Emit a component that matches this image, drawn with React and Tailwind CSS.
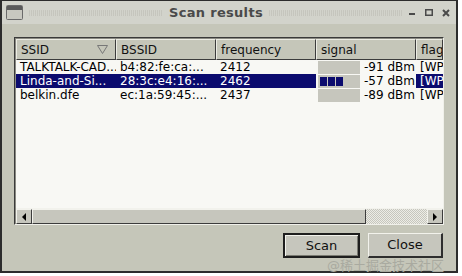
import React from 'react';

const ROWS = [
  { ssid: 'TALKTALK-CAD...', bssid: 'b4:82:fe:ca:...', freq: '2412', level: 0, dbm: '-91 dBm', flag: '[WP', selected: false },
  { ssid: 'Linda-and-Si...', bssid: '28:3c:e4:16:...', freq: '2462', level: 3, dbm: '-57 dBm', flag: '[WP', selected: true },
  { ssid: 'belkin.dfe', bssid: 'ec:1a:59:45:...', freq: '2437', level: 0, dbm: '-89 dBm', flag: '[WP', selected: false },
];

function HeaderCell({ children, w, last }) {
  return (
    <div
      className={`relative flex h-full shrink-0 items-center border-t border-l border-t-[#ececE4] border-l-[#ececE4] border-r border-b border-r-[#3c3c3c] border-b-[#3c3c3c] pl-[4px] ${last ? 'flex-1 overflow-hidden' : ''}`}
      style={w ? { width: w } : undefined}
    >
      {children}
    </div>
  );
}

function SignalBar({ level }) {
  return (
    <div className="flex h-[13px] w-[42px] shrink-0 items-center gap-[1px] bg-[#c6c6bd] pl-[2px]">
      {Array.from({ length: level }).map((_, i) => (
        <div key={i} className="h-[9px] w-[7px] bg-[#0b0b6e]" />
      ))}
    </div>
  );
}

function Row({ r }) {
  const sel = r.selected;
  const cell = `h-full shrink-0 whitespace-nowrap pl-[4px] overflow-hidden ${sel ? 'bg-[#0b0b6e] text-white' : 'text-black'}`;
  return (
    <div className="flex h-[14px] items-center leading-[14px]">
      <div className={`${cell} w-[100px] pl-[3px]`}>{r.ssid}</div>
      <div className={`${cell} w-[100px]`}>{r.bssid}</div>
      <div className={`${cell} w-[100px]`}>{r.freq}</div>
      <div className="flex h-full w-[100px] shrink-0 items-center gap-[4px] pl-[2px] text-black">
        <SignalBar level={r.level} />
        <span className="whitespace-nowrap">{r.dbm}</span>
      </div>
      <div className={`${cell} flex-1 pl-[2px]`}>{r.flag}</div>
    </div>
  );
}

function ArrowBtn({ dir }) {
  return (
    <div className="flex h-full w-[16px] shrink-0 items-center justify-center border-t border-l border-t-[#f2f2ec] border-l-[#f2f2ec] border-r border-b border-r-[#3c3c3c] border-b-[#3c3c3c] bg-[#c6c6bd]">
      <svg width="6" height="8" viewBox="0 0 6 8">
        {dir === 'left' ? <path d="M5 0 L1 4 L5 8 Z" fill="#000" /> : <path d="M1 0 L5 4 L1 8 Z" fill="#000" />}
      </svg>
    </div>
  );
}

export default function App() {
  return (
    <div className="h-[276px] w-[462px] bg-white" style={{ fontFamily: '"DejaVu Sans", "Noto Sans CJK SC", sans-serif' }}>
      <div className="flex h-[273px] w-[458px] flex-col border-[2px] border-[#2c2c2c] border-t-[1px] bg-[#c5c6b9]">
        {/* title bar */}
        <div className="flex h-[23px] shrink-0 items-center bg-[#d2d3cb] pl-[4px] pr-[6px]">
          <svg width="17" height="15" viewBox="0 0 17 15" className="shrink-0">
            <rect x="0.5" y="0.5" width="16" height="14" rx="1" fill="#c8c8c0" stroke="#6a6a6a" />
            <rect x="1" y="1" width="15" height="4" fill="#5a5a5a" />
          </svg>
          <div className="mx-[6px] h-[6px] flex-1 bg-[repeating-linear-gradient(90deg,#c2c2ba_0px,#c2c2ba_1px,transparent_1px,transparent_2px)] opacity-80" />
          <span className="shrink-0 text-[13px] font-bold tracking-[0.3px] text-[#4a4a4a]">Scan results</span>
          <div className="mx-[6px] h-[6px] flex-1 bg-[repeating-linear-gradient(90deg,#c2c2ba_0px,#c2c2ba_1px,transparent_1px,transparent_2px)] opacity-80" />
          <div className="flex shrink-0 items-center gap-[9px] text-[#4a4a4a]">
            <svg width="7" height="7" viewBox="0 0 7 7"><rect x="0" y="4" width="6" height="2" fill="#4a4a4a" /></svg>
            <svg width="8" height="7" viewBox="0 0 8 7"><rect x="0.75" y="0.75" width="6.5" height="5.5" fill="none" stroke="#4a4a4a" strokeWidth="1.5" /></svg>
            <svg width="8" height="8" viewBox="0 0 8 8"><path d="M1 1 L7 7 M7 1 L1 7" stroke="#4a4a4a" strokeWidth="2" /></svg>
          </div>
        </div>

        {/* body */}
        <div className="flex flex-1 flex-col px-[12px] pt-[13px]">
          <div className="flex h-[188px] w-[430px] flex-col overflow-hidden border-[1px] border-t-[#3a3a3a] border-l-[#3a3a3a] border-r-[#f0f0ea] border-b-[#f0f0ea]">
            <div className="flex flex-1 flex-col overflow-hidden border-t border-l border-t-[#8a8a82] border-l-[#8a8a82] bg-[#f8f8f4] text-[12px]">
              {/* header */}
              <div className="flex h-[21px] shrink-0 text-[12px] text-[#111] bg-[#c5c6b9]">
                <HeaderCell w={100}>
                  <span>SSID</span>
                  <svg width="11" height="9" viewBox="0 0 11 9" className="absolute right-[7px] top-[5px]">
                    <path d="M0.5 0.5 L10.5 0.5 L5.5 8.5 Z" fill="none" stroke="#777" />
                  </svg>
                </HeaderCell>
                <HeaderCell w={100}>BSSID</HeaderCell>
                <HeaderCell w={100}>frequency</HeaderCell>
                <HeaderCell w={100}>signal</HeaderCell>
                <HeaderCell last>flag</HeaderCell>
              </div>
              {/* rows */}
              <div className="flex-1">
                {ROWS.map((r) => (
                  <Row key={r.bssid} r={r} />
                ))}
              </div>
              {/* horizontal scrollbar */}
              <div className="flex h-[16px] shrink-0 border-t border-[#f2f2ec] bg-[#c6c6bd]">
                <ArrowBtn dir="left" />
                <div className="h-full w-[334px] shrink-0 border-t border-l border-t-[#f2f2ec] border-l-[#f2f2ec] border-r border-b border-r-[#3c3c3c] border-b-[#3c3c3c] bg-[#c6c6bd]" />
                <div className="h-full flex-1 bg-[repeating-conic-gradient(#c6c6bd_0%_25%,#ececE6_0%_50%)] bg-[length:2px_2px]" />
                <ArrowBtn dir="right" />
              </div>
            </div>
          </div>

          {/* buttons */}
          <div className="mt-[8px] flex justify-end gap-[8px] pr-[1px]">
            <button className="flex h-[25px] w-[77px] items-center justify-center border-[2px] border-[#1e1e1e] bg-[#c6c6bd] text-[13px] text-[#111] shadow-[inset_1px_1px_0_#f2f2ec,inset_-1px_-1px_0_#7a7a72]">
              Scan
            </button>
            <button className="flex h-[25px] w-[75px] items-center justify-center border-t border-l border-t-[#f2f2ec] border-l-[#f2f2ec] border-r-[2px] border-b-[2px] border-r-[#2e2e2e] border-b-[#2e2e2e] bg-[#c6c6bd] text-[13px] text-[#111]">
              Close
            </button>
          </div>
          <div className="mt-[1px] flex justify-end pr-[0px] text-[13px] leading-[14px] text-[#a9aaa0]">@稀土掘金技术社区</div>
        </div>
      </div>
    </div>
  );
}
